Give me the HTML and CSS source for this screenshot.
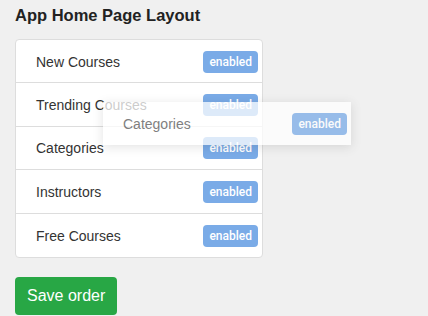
FILE: index.html
```html
<!DOCTYPE html>
<html lang="en">
<head>
    <meta charset="UTF-8">
    <title>App Home Page Layout</title>
    <link rel="stylesheet" href="styles.css">
</head>
<body>
    <div class="pagina">
        <h1>App Home Page Layout</h1>

        <ul class="lista">
            <li class="fila">New Courses <span class="badge">enabled</span></li>
            <li class="fila">Trending Courses <span class="badge">enabled</span></li>
            <li class="fila">Categories <span class="badge">enabled</span></li>
            <li class="fila">Instructors <span class="badge">enabled</span></li>
            <li class="fila">Free Courses <span class="badge">enabled</span></li>
        </ul>

        <div class="fila arrastrando">Categories <span class="badge">enabled</span></div>

        <button class="guardar">Save order</button>
    </div>
</body>
</html>
```

FILE: styles.css
```css
body {
    font-family: "Liberation Sans", Arial, sans-serif;
    background-color: #f0f0f0;
    margin: 0;
    color: #333;
}
.pagina {
    position: relative;
    padding: 0 15px;
}
h1 {
    font-size: 16.5px;
    font-weight: bold;
    color: #222;
    margin: 0;
    padding-top: 6px;
    height: 33px;
}
.lista {
    list-style: none;
    margin: 0;
    padding: 0;
    width: 248px;
    background: white;
    border: 1px solid #ddd;
    border-radius: 4px;
    box-sizing: border-box;
}
.fila {
    display: flex;
    align-items: center;
    justify-content: space-between;
    height: 43.4px;
    padding: 1px 4px 0 20px;
    font-size: 14px;
    box-sizing: border-box;
    border-bottom: 1px solid #ddd;
}
.lista .fila:last-child {
    border-bottom: none;
}
.badge {
    background: #7aabe7;
    color: white;
    font-family: Roboto, "Liberation Sans", sans-serif;
    font-size: 12px;
    font-weight: 500;
    padding: 4px 6px;
    border-radius: 4px;
}
.arrastrando {
    position: absolute;
    left: 103px;
    top: 102px;
    width: 248px;
    background: white;
    border: none;
    opacity: 0.75;
    box-shadow: 0 2px 10px rgba(0, 0, 0, 0.15);
    color: #555;
}
.guardar {
    margin-top: 19px;
    background: #28a745;
    color: white;
    border: none;
    border-radius: 4px;
    font-family: inherit;
    font-size: 16px;
    padding: 0 12px;
    height: 38px;
}
```
